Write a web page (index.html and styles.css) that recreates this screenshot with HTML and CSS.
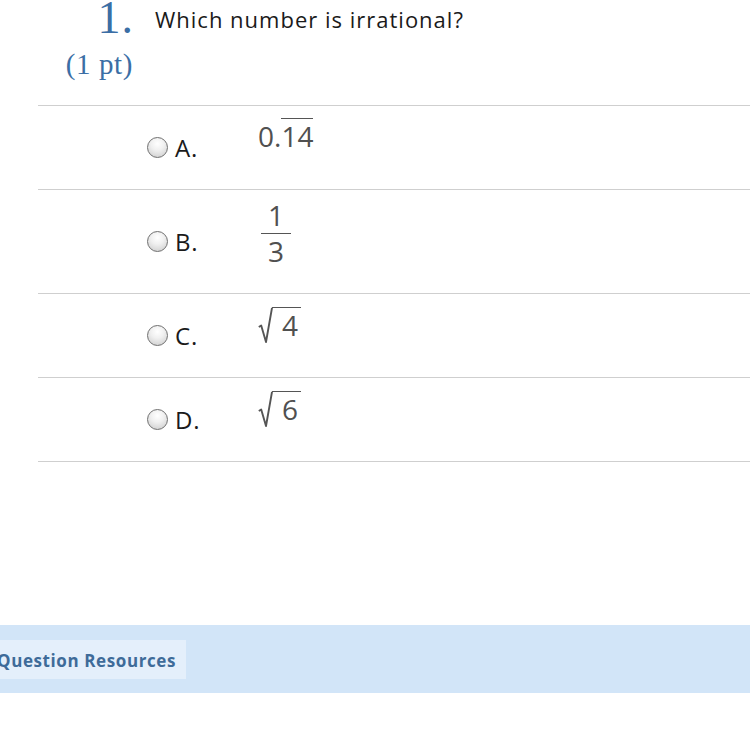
FILE: index.html
```html
<!DOCTYPE html>
<html>
<head>
<meta charset="utf-8">
<link rel="stylesheet" href="styles.css">
</head>
<body>
<div class="question">
  <div class="qhead">
    <div class="qnum">
      <div class="num">1.</div>
      <div class="pts">(1 pt)</div>
    </div>
    <div class="qtext">Which number is irrational?</div>
  </div>
  <div class="options">
    <div class="opt">
      <span class="radio"></span><span class="letter">A.</span>
      <span class="math m-a">0.<span class="over">14</span></span>
    </div>
    <div class="opt opt-tall">
      <span class="radio"></span><span class="letter">B.</span>
      <span class="math m-b"><span class="frac"><span class="numer">1</span><span class="denom">3</span></span></span>
    </div>
    <div class="opt">
      <span class="radio"></span><span class="letter">C.</span>
      <span class="math m-c"><span class="sqrt"><svg class="rad" width="15" height="36" viewBox="0 0 15 36"><path d="M0.8 20 L3.2 18.5 L8 35 L14 0.9" fill="none" stroke="#555" stroke-width="1.9" stroke-linejoin="round"/></svg><span class="radicand">4</span></span></span>
    </div>
    <div class="opt">
      <span class="radio"></span><span class="letter">D.</span>
      <span class="math m-c"><span class="sqrt"><svg class="rad" width="15" height="36" viewBox="0 0 15 36"><path d="M0.8 20 L3.2 18.5 L8 35 L14 0.9" fill="none" stroke="#555" stroke-width="1.9" stroke-linejoin="round"/></svg><span class="radicand">6</span></span></span>
    </div>
  </div>
</div>
<div class="resources">
  <div class="res-tab">Question Resources</div>
</div>
</body>
</html>
```

FILE: styles.css
```css
html, body {
  margin: 0;
  padding: 0;
  background: #ffffff;
}
body {
  font-family: "Open Sans", "Noto Sans", sans-serif;
  color: #1a1a1a;
  width: 750px;
  overflow: hidden;
}
.qhead {
  display: flex;
  height: 105px;
}
.qnum {
  width: 133px;
  text-align: right;
  font-family: "Liberation Serif", serif;
  color: #3b6ea5;
}
.num {
  font-size: 46px;
  line-height: 1;
  margin-top: -5px;
  letter-spacing: 1px;
  margin-right: -1px;
}
.pts {
  font-size: 29px;
  line-height: 1;
  margin-top: 9px;
  letter-spacing: 0.6px;
}
.qtext {
  margin-left: 22px;
  font-size: 22px;
  line-height: 1.2;
  padding-top: 6px;
  letter-spacing: 1px;
}
.options {
  margin-left: 38px;
  border-top: 1px solid #cfcfcf;
}
.opt {
  display: flex;
  align-items: center;
  height: 83px;
  border-bottom: 1px solid #cfcfcf;
  padding-left: 109px;
}
.opt-tall {
  height: 103px;
}
.radio {
  width: 19px;
  height: 19px;
  border-radius: 50%;
  border: 1px solid #6f6f6f;
  background: radial-gradient(circle at 50% 30%, #ffffff 0%, #f0f0f0 40%, #c9c9c9 100%);
  box-sizing: content-box;
  flex: none;
}
.letter {
  margin-left: 7px;
  width: 83px;
  font-size: 24px;
  letter-spacing: 0.8px;
  line-height: 1;
  color: #1a1a1a;
}
.math {
  font-size: 28px;
  color: #505050;
  line-height: 1;
}
.m-a {
  margin-bottom: 28px;
}
.over {
  border-top: 1.6px solid #555;
  padding-top: 3px;
  display: inline-block;
  line-height: 1;
}
.m-b {
  margin-bottom: 18px;
}
.frac {
  display: inline-flex;
  flex-direction: column;
  align-items: center;
  margin-left: 3px;
}
.numer {
  display: block;
  padding: 0 7px 4px;
  border-bottom: 1.6px solid #555;
  line-height: 1;
}
.denom {
  display: block;
  padding-top: 3px;
  line-height: 1;
}
.m-c {
  margin-bottom: 18px;
}
.sqrt {
  display: inline-flex;
  align-items: flex-start;
}
.rad {
  display: block;
}
.radicand {
  border-top: 1.8px solid #555;
  margin-left: -1px;
  padding: 3px 3px 0 10px;
  line-height: 1;
}
.resources {
  margin-top: 163px;
  height: 68px;
  background: #d2e5f8;
  display: flex;
  align-items: center;
}
.res-tab {
  background: #e4effb;
  height: 39px;
  width: 189px;
  box-sizing: border-box;
  display: flex;
  align-items: center;
  margin-left: -3px;
  padding-top: 2px;
  font-size: 17px;
  font-weight: 700;
  letter-spacing: 0.6px;
  color: #3e6b99;
}
```
